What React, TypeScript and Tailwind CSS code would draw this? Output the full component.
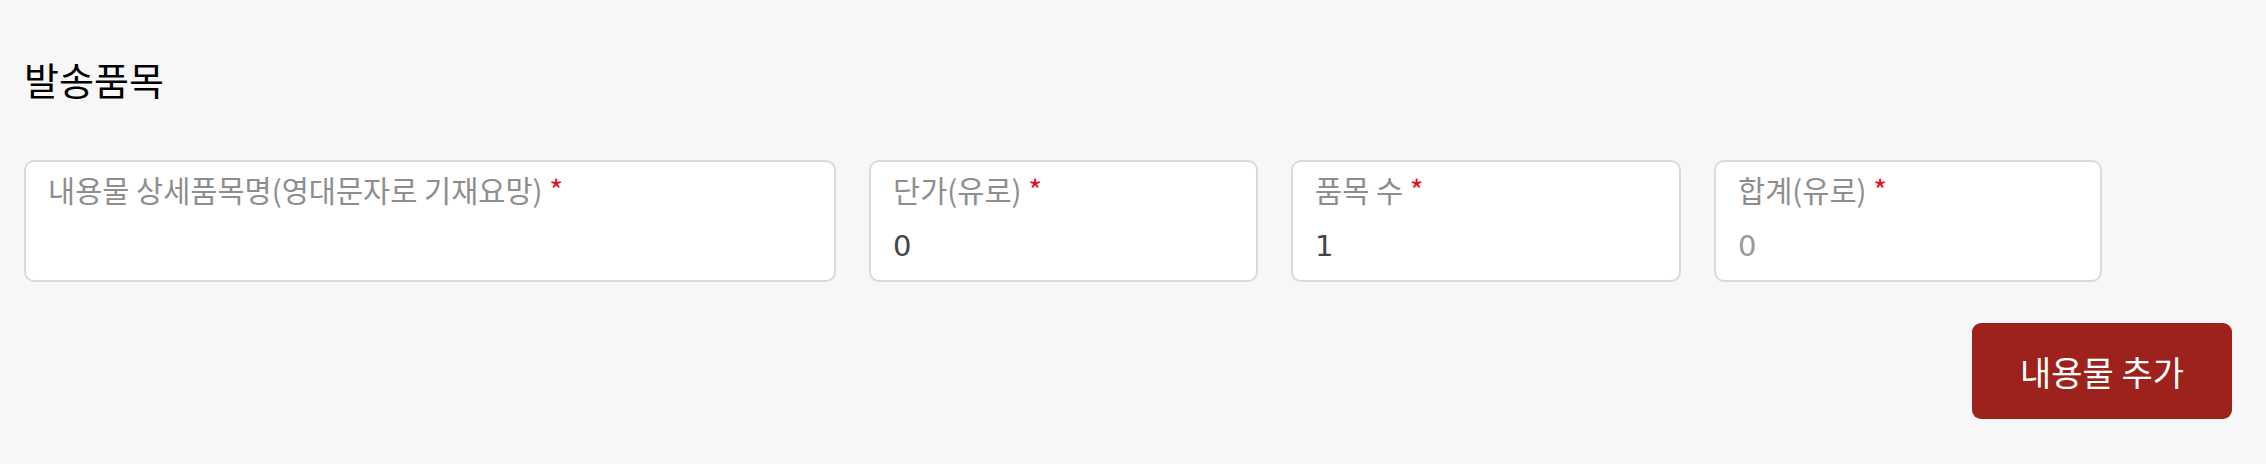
const KR = "font-['Noto_Sans_CJK_KR','Noto_Sans',sans-serif]";

interface FieldProps {
    label: string;
    value?: string;
    width: string;
    muted?: boolean;
}

function Field({ label, value, width, muted = false }: FieldProps) {
    return (
        <div className={`${width} h-[122px] shrink-0 rounded-[10px] border-2 border-[#dadada] bg-white px-[22px] pt-[9px]`}>
            <div className={`${KR} text-[29.5px] leading-[36px] text-[#8e8e8e]`}>
                {label} <span className="text-[#e0141e]">*</span>
            </div>
            {value !== undefined && (
                <div
                    className={`mt-[22px] font-['DejaVu_Sans',sans-serif] text-[29px] leading-[34px] ${
                        muted ? "text-[#9a9a9a]" : "text-[#444444]"
                    }`}
                >
                    {value}
                </div>
            )}
        </div>
    );
}

export default function App() {
    return (
        <div className="min-h-[464px] w-full bg-[#f7f7f7] pl-[24px] pr-[34px] pt-[54px]">
            <h2 className={`${KR} text-[38px] leading-[50px] font-normal text-black`}>발송품목</h2>
            <div className="mt-[56px] flex gap-[33px]">
                <Field label="내용물 상세품목명(영대문자로 기재요망)" width="w-[812px]" />
                <Field label="단가(유로)" value="0" width="w-[389px]" />
                <Field label="품목 수" value="1" width="w-[390px]" />
                <Field label="합계(유로)" value="0" width="w-[388px]" muted />
            </div>
            <div className="mt-[41px] flex justify-end">
                <button
                    type="button"
                    className={`${KR} h-[96px] w-[260px] rounded-[9px] bg-[#9e221c] text-[34px] text-white`}
                >
                    내용물 추가
                </button>
            </div>
        </div>
    );
}
